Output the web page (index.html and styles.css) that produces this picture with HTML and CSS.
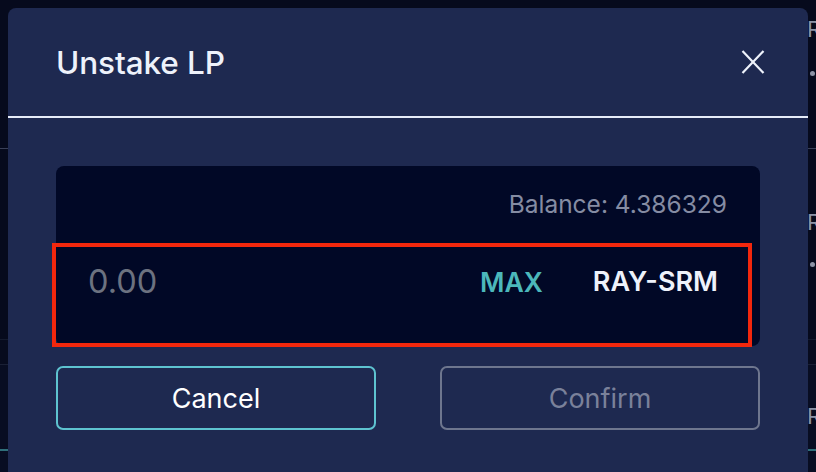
FILE: index.html
```html
<!DOCTYPE html>
<html>
<head>
<meta charset="utf-8">
<link rel="stylesheet" href="styles.css">
</head>
<body>
<div class="page">
  <div class="row row-first">
    <span class="cell-text">RAY-SRM</span>
    <span class="cell-dot"></span>
  </div>
  <div class="row row-second">
    <span class="cell-text">RAY-USDT</span>
    <span class="cell-dot"></span>
  </div>
  <div class="row-band"></div>
  <div class="row row-third">
    <span class="cell-text">RAY-SOL</span>
    <div class="cell-bar"></div>
  </div>
</div>

<div class="overlay">
  <div class="modal">
    <div class="modal-header">
      <h2 class="modal-title">Unstake LP</h2>
      <button class="close-btn" aria-label="Close">
        <svg width="24" height="24" viewBox="0 0 24 24">
          <path d="M1.5 1 L22.5 23 M22.5 1 L1.5 23" stroke="#eef2fb" stroke-width="2.2" fill="none" stroke-linecap="butt"/>
        </svg>
      </button>
    </div>
    <div class="modal-body">
      <div class="amount-box">
        <div class="balance">Balance: 4.386329</div>
        <div class="input-row">
          <span class="amount">0.00</span>
          <span class="max">MAX</span>
          <span class="token">RAY-SRM</span>
        </div>
      </div>
      <div class="actions">
        <button class="btn btn-cancel">Cancel</button>
        <button class="btn btn-confirm">Confirm</button>
      </div>
    </div>
  </div>
</div>
</body>
</html>
```

FILE: styles.css
```css
html, body {
  margin: 0;
  padding: 0;
}
body {
  width: 816px;
  height: 472px;
  overflow: hidden;
  background: #060a1d;
  font-family: Inter, "Noto Sans", "Liberation Sans", sans-serif;
  position: relative;
}

/* background page */
.page {
  display: flex;
  flex-direction: column;
}
.row {
  display: flex;
  flex-direction: column;
  padding-left: 807px;
  box-sizing: border-box;
  overflow: hidden;
  white-space: nowrap;
}
.cell-text {
  font-size: 22px;
  line-height: 26px;
  color: #8d93a6;
}
.cell-dot {
  display: block;
  width: 5px;
  height: 5px;
  border-radius: 50%;
  background: #8d93a6;
  margin-left: 3px;
}
.row-first {
  height: 149px;
  padding-top: 16px;
  border-bottom: 1px solid #3a4058;
}
.row-first .cell-dot { margin-top: 29px; }
.row-second {
  height: 191px;
  padding-top: 60px;
  border-bottom: 1px solid #141a2e;
}
.row-second .cell-dot { margin-top: 27px; }
.row-band {
  height: 24px;
  background: #070b1e;
  border-bottom: 1px solid #1a2035;
}
.row-third {
  height: 120px;
  padding-top: 38px;
  background: #080d22;
}
.cell-bar {
  margin-top: 20px;
  margin-left: -807px;
  width: 816px;
  height: 2px;
  background: #2f6f7a;
}

/* modal overlay */
.overlay {
  position: absolute;
  top: 8px;
  left: 8px;
}
.modal {
  width: 800px;
  height: 480px;
  background: #1e2950;
  border-radius: 8px;
  color: #eef2fb;
}
.modal-header {
  height: 108px;
  display: flex;
  align-items: center;
  justify-content: space-between;
  padding: 0 43px 0 48px;
  border-bottom: 2px solid #e6ecf8;
}
.modal-title {
  margin: 0;
  font-size: 31.5px;
  font-weight: 500;
  letter-spacing: -0.1px;
  color: #eef2fb;
}
.close-btn {
  background: none;
  border: 0;
  padding: 0;
  width: 24px;
  height: 24px;
  display: flex;
}

.modal-body {
  padding: 48px 48px 0;
}
.amount-box {
  height: 180px;
  box-sizing: border-box;
  background: #010826;
  border-radius: 8px;
  padding: 24px 0 0 0;
  display: flex;
  flex-direction: column;
}
.balance {
  align-self: flex-end;
  padding-right: 33px;
  font-size: 24.5px;
  line-height: 28px;
  color: #858ca3;
}
.input-row {
  margin-top: 29px;
  margin-right: 12px;
  height: 96px;
  box-sizing: border-box;
  outline: 4px solid #f2270d;
  display: flex;
  align-items: flex-start;
  padding: 17px 30px 0 32px;
}
.amount {
  flex: 1;
  font-size: 32.5px;
  line-height: 36px;
  color: #6c7280;
}
.max {
  font-size: 26.5px;
  line-height: 36px;
  font-weight: 600;
  color: #4cb8bb;
  margin-right: 50px;
}
.token {
  font-size: 27px;
  line-height: 36px;
  font-weight: 600;
  color: #eef2fb;
}

.actions {
  margin-top: 20px;
  display: flex;
  gap: 64px;
}
.btn {
  width: 320px;
  height: 64px;
  border-radius: 7px;
  background: transparent;
  font-family: Inter, "Noto Sans", "Liberation Sans", sans-serif;
  font-size: 27px;
  font-weight: 400;
}
.btn-cancel {
  border: 2px solid #5ec3d0;
  color: #ffffff;
}
.btn-confirm {
  border: 2px solid #6e768e;
  color: #7a819a;
}
```
